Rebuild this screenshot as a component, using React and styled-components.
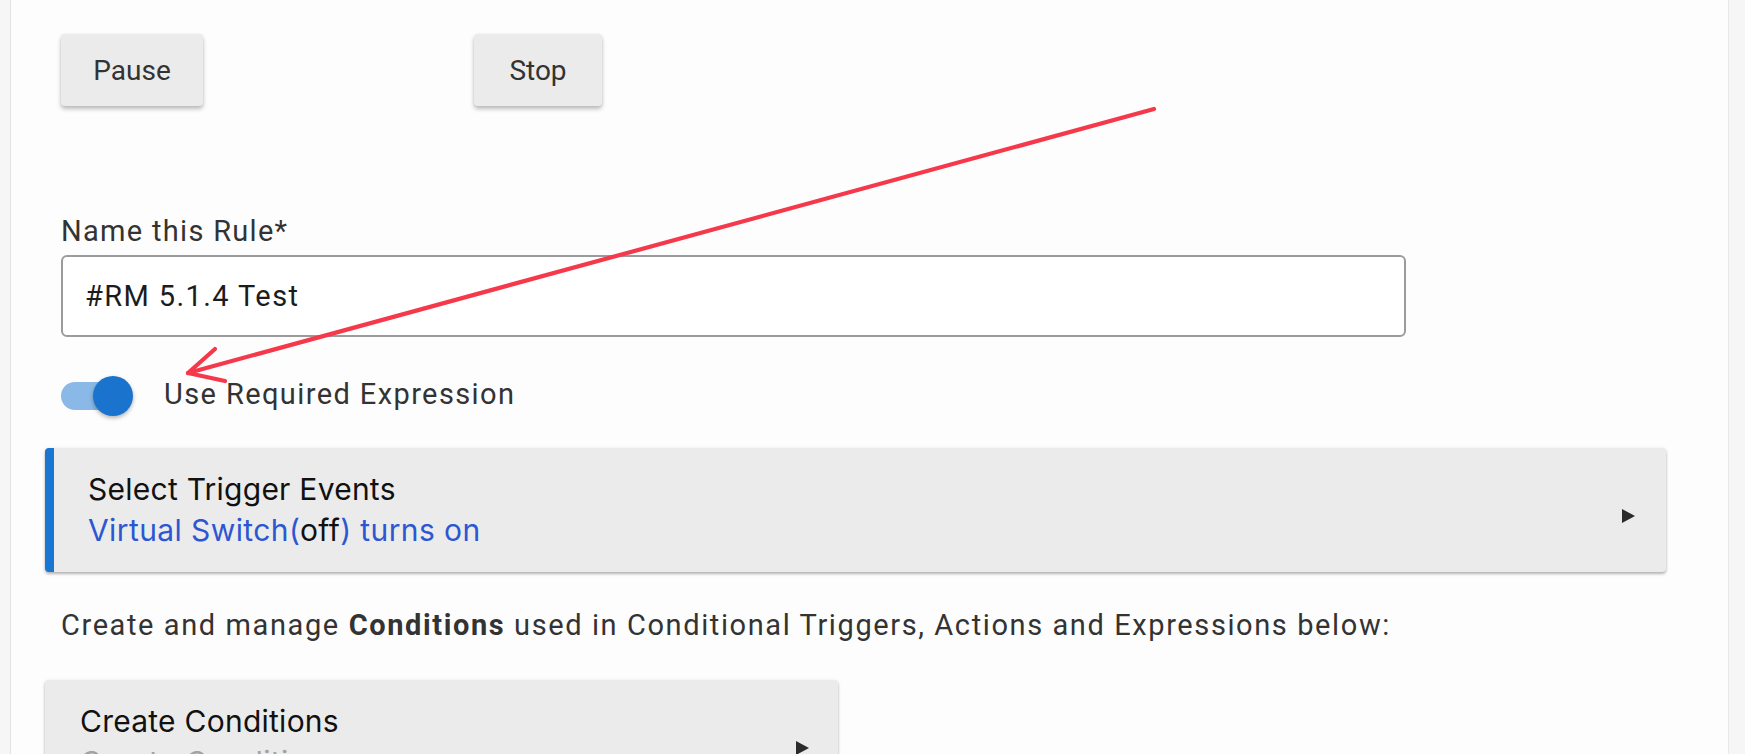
import React from "react";
import styled, { createGlobalStyle } from "styled-components";

const Global = createGlobalStyle`
  body {
    margin: 0;
    background: #f6f6f6;
    font-family: Roboto, "Liberation Sans", sans-serif;
    color: #333;
  }
`;

function Page() {
  return (
    <Shell>
      <Sheet>
        <ButtonRow>
          <ActionButton $w={142}>Pause</ActionButton>
          <ActionButton $w={128}>Stop</ActionButton>
        </ButtonRow>

        <Label>Name this Rule*</Label>
        <NameInput defaultValue="#RM 5.1.4 Test" />

        <SwitchRow>
          <Toggle>
            <Track />
            <Thumb />
          </Toggle>
          <SwitchText>Use Required Expression</SwitchText>
        </SwitchRow>

        <Card $accent $w={1621} $pl={34} $pr={30} $mt={32}>
          <div>
            <CardTitle>Select Trigger Events</CardTitle>
            <CardSub>
              Virtual Switch(<Plain>off</Plain>) turns on
            </CardSub>
          </div>
          <Caret />
        </Card>

        <Para>
          Create and manage <b>Conditions</b> used in Conditional Triggers,
          Actions and Expressions below:
        </Para>

        <Card $w={793} $pl={35} $pr={28} $mt={37}>
          <div>
            <CardTitle>Create Conditions</CardTitle>
            <CardSub $muted>Create Conditions</CardSub>
          </div>
          <Caret />
        </Card>
      </Sheet>

      {/* hand-drawn annotation on top of the screenshot */}
      <Annotation width="1745" height="754" viewBox="0 0 1745 754">
        <g
          fill="none"
          stroke="#f5384a"
          strokeWidth="4.2"
          strokeLinecap="round"
          strokeLinejoin="round"
        >
          <path d="M1154 109 L188 373" />
          <path d="M215 349 L188 373 L225 381" />
        </g>
      </Annotation>
    </Shell>
  );
}

function Caret() {
  return (
    <CaretIcon width="15" height="16" viewBox="0 0 15 16">
      <path d="M1 1 L14 8 L1 15 Z" fill="#2b2b2b" />
    </CaretIcon>
  );
}

export default function App() {
  return (
    <>
      <Global />
      <Page />
    </>
  );
}

const Shell = styled.div`
  position: relative;
  height: 754px;
  overflow: hidden;
`;

const Sheet = styled.div`
  margin-left: 10px;
  width: 1719px;
  min-height: 754px;
  box-sizing: border-box;
  background: #fdfdfd;
  border-left: 1px solid #e2e2e2;
  border-right: 1px solid #e9e9e9;
  padding: 34px 0 0 50px;
  display: flex;
  flex-direction: column;
  align-items: flex-start;
`;

const ButtonRow = styled.div`
  display: grid;
  grid-template-columns: 413px auto;
  align-items: start;
`;

const ActionButton = styled.button`
  width: ${(p) => p.$w}px;
  height: 72px;
  border: none;
  border-radius: 4px;
  background: #ebebeb;
  color: #333;
  font-family: Roboto, sans-serif;
  font-size: 28px;
  box-shadow: 0 3px 4px rgba(0, 0, 0, 0.26), 0 0 3px rgba(0, 0, 0, 0.05);
  padding: 0;
`;

const Label = styled.div`
  margin-top: 107px;
  font-size: 29px;
  line-height: 36px;
  letter-spacing: 1.3px;
  color: #333;
`;

const NameInput = styled.input`
  margin-top: 6px;
  width: 1345px;
  height: 82px;
  box-sizing: border-box;
  border: 2px solid #9b9b9b;
  border-radius: 6px;
  background: #fff;
  padding: 0 0 0 22px;
  font-family: Roboto, sans-serif;
  font-size: 29px;
  letter-spacing: 1.4px;
  color: #1c1c1c;
  outline: none;
`;

const SwitchRow = styled.div`
  margin-top: 39px;
  display: flex;
  align-items: flex-start;
  gap: 31px;
`;

const Toggle = styled.div`
  position: relative;
  width: 72px;
  height: 40px;
`;

const Track = styled.div`
  margin-top: 6px;
  width: 64px;
  height: 28px;
  border-radius: 14px;
  background: #8ab9e7;
`;

const Thumb = styled.div`
  position: absolute;
  top: 0;
  left: 32px;
  width: 40px;
  height: 40px;
  border-radius: 50%;
  background: #1a73cc;
  box-shadow: 0 2px 4px rgba(0, 0, 0, 0.3);
`;

const SwitchText = styled.div`
  font-size: 29px;
  line-height: 36px;
  letter-spacing: 1.4px;
  color: #333;
`;

const Card = styled.div`
  margin-top: ${(p) => p.$mt}px;
  margin-left: -16px;
  width: ${(p) => p.$w}px;
  box-sizing: border-box;
  display: flex;
  align-items: center;
  justify-content: space-between;
  background: #ebebeb;
  border-radius: 4px;
  border-left: ${(p) => (p.$accent ? "9px solid #1976d2" : "none")};
  box-shadow: 0 2px 3px rgba(0, 0, 0, 0.28), 0 0 4px rgba(0, 0, 0, 0.06);
  padding: 21px ${(p) => p.$pr}px 21px ${(p) => p.$pl}px;
  font-family: Inter, "Liberation Sans", sans-serif;
  font-size: 30px;
  line-height: 41px;
  letter-spacing: 0.25px;
`;

const CardTitle = styled.div`
  color: #111;
`;

const CardSub = styled.div`
  color: ${(p) => (p.$muted ? "#a3a3a3" : "#2d57d2")};
  letter-spacing: 0.4px;
`;

const Plain = styled.span`
  color: #111;
`;

const CaretIcon = styled.svg`
  flex: none;
  margin-top: 12px;
`;

const Para = styled.p`
  margin: 35px 0 0;
  font-size: 29px;
  line-height: 36px;
  letter-spacing: 1.6px;
  color: #333;

  b {
    font-weight: 700;
  }
`;

const Annotation = styled.svg`
  position: absolute;
  top: 0;
  left: 0;
  pointer-events: none;
`;
